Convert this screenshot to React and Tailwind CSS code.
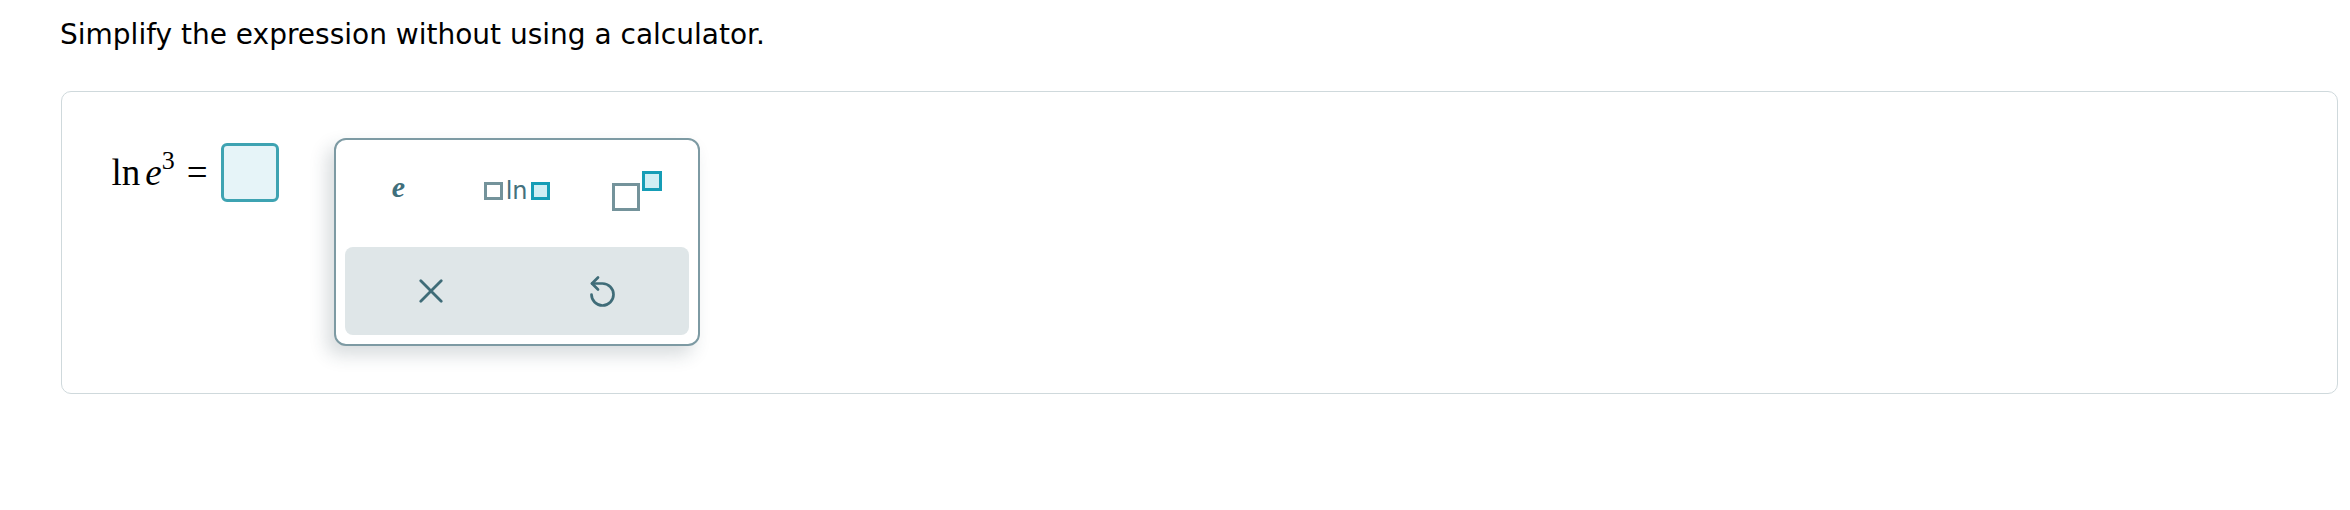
import React from 'react';

// Small answer-box glyphs used in the palette buttons
const Slot = ({ active = false, size = 'w-[19px] h-[18px]' }) => (
  <span
    className={`block ${size} border-[3px] ${
      active ? 'border-[#159db6] bg-[#cfeef4]' : 'border-[#74939b] bg-white'
    }`}
  />
);

const CloseIcon = () => (
  <svg width="24" height="24" viewBox="0 0 24 24" fill="none" stroke="#3f6c78" strokeWidth="2.8" strokeLinecap="round">
    <path d="M1.8 1.8 L22.2 22.2 M22.2 1.8 L1.8 22.2" />
  </svg>
);

const UndoIcon = () => (
  <svg width="32" height="38" viewBox="0 0 32 38" fill="none" stroke="#3f6c78" strokeWidth="2.7" strokeLinecap="round" strokeLinejoin="round">
    <path d="M5 10.5 H15.5 A11 11 0 1 1 4.5 21.5" />
    <path d="M11 4.5 L5 10.5 L11 16.5" />
  </svg>
);

const Palette = () => (
  <div className="ml-[55px] w-[366px] h-[208px] border-2 border-[#7d9aa3] rounded-[12px] bg-white flex flex-col shadow-[-7px_9px_18px_rgba(40,60,70,0.18)]">
    {/* Insert buttons */}
    <div className="grid grid-cols-3 h-[102px] items-center justify-items-center">
      <span className="pl-[5px] mb-[8px] font-['Liberation_Serif',serif] italic font-bold text-[30px] leading-none text-[#3f6f7c]">
        e
      </span>
      <div className="flex items-center gap-[3px]">
        <Slot />
        <span className="font-['DejaVu_Sans',sans-serif] text-[24px] leading-none text-[#44717d]">ln</span>
        <Slot active />
      </div>
      <div className="flex gap-[2px] h-[40px]">
        <Slot size="w-[28px] h-[28px] self-end" />
        <Slot active size="w-[20px] h-[20px] self-start" />
      </div>
    </div>

    {/* Clear / undo */}
    <div className="mx-[9px] mt-[5px] h-[88px] rounded-[8px] bg-[#dfe6e8] grid grid-cols-2 items-center justify-items-center">
      <CloseIcon />
      <div className="mt-[1px]">
        <UndoIcon />
      </div>
    </div>
  </div>
);

export default function App() {
  return (
    <div className="w-[2350px] h-[510px] bg-white font-['DejaVu_Sans',sans-serif]">
      <div className="h-[91px] pt-[21px] pl-[60px]">
        <p className="text-[28px] leading-none text-black">Simplify the expression without using a calculator.</p>
      </div>

      <div className="ml-[61px] w-[2277px] h-[303px] border-[1.5px] border-[#cfd9dc] rounded-[10px] flex items-start pt-[46px] pl-[49.5px]">
        {/* ln e^3 = [ ] */}
        <div className="mt-[5px] flex items-center font-['Liberation_Serif',serif] text-black">
          <span className="text-[37px] leading-none">
            ln
            <span className="ml-[5px] italic">e</span>
            <span className="relative -top-[16px] text-[26px] leading-none">3</span>
          </span>
          <span className="ml-[12px] text-[37px] leading-none">=</span>
          <div className="ml-[13px] w-[58px] h-[59px] rounded-[6px] border-[3px] border-[#3ea3b2] bg-[#e6f4f8]" />
        </div>

        <Palette />
      </div>
    </div>
  );
}
